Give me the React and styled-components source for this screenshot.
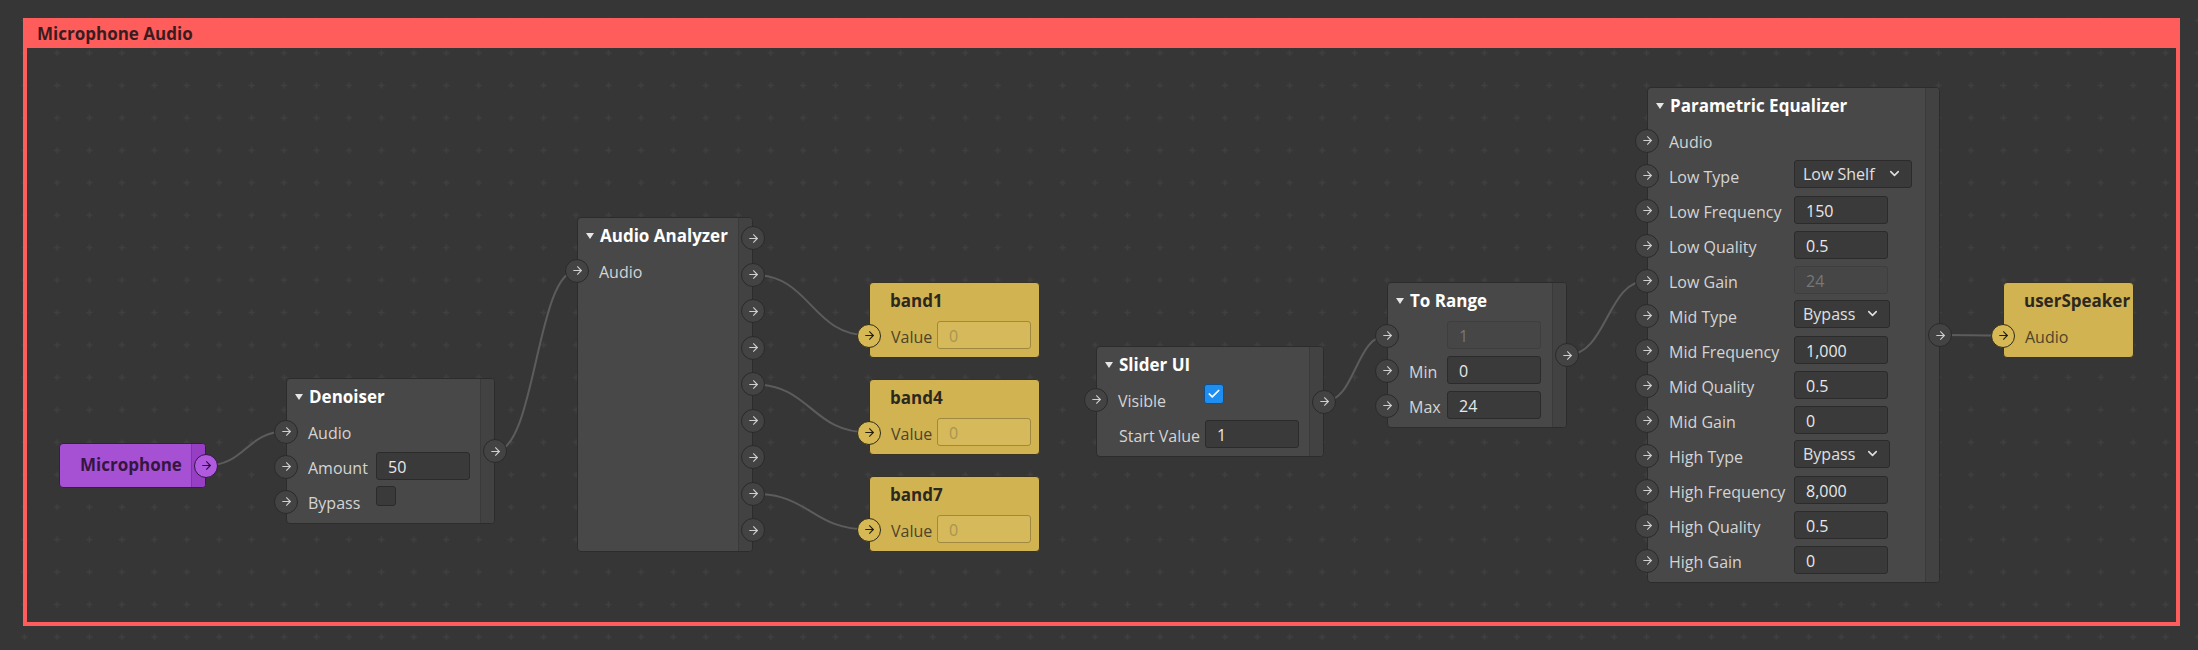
import styled, { createGlobalStyle } from "styled-components";
import { ArrowRight, ChevronDown, Check } from "lucide-react";

const GlobalStyle = createGlobalStyle`
	html, body {
		margin: 0;
		padding: 0;
		background: #363636;
	}
	body {
		font-family: "Open Sans", "Noto Sans", sans-serif;
		overflow: hidden;
	}
	* {
		box-sizing: border-box;
	}
`;

const tones = {
	dark: {
		bg: "#484848",
		border: "#2c2c2c",
		title: "#ffffff",
		label: "#d4d4d4",
		strip: "#424242",
		port: "#434343",
		portBorder: "#2a2a2a",
		arrow: "#d0d0d0",
	},
	yellow: {
		bg: "#d1b352",
		border: "#3a3322",
		title: "#2c2820",
		label: "#4d4429",
		strip: "#c4a748",
		port: "#d6b954",
		portBorder: "#2e2a1c",
		arrow: "#221e14",
	},
	purple: {
		bg: "#a650d4",
		border: "#3a1a4a",
		title: "#35163f",
		label: "#35163f",
		strip: "#973fc4",
		port: "#b05ae0",
		portBorder: "#341543",
		arrow: "#2a1034",
	},
};

const Canvas = styled.div`
	position: relative;
	width: 2198px;
	height: 650px;
	background: #363636;
	overflow: hidden;
`;

const Layer = styled.svg`
	position: absolute;
	left: 0;
	top: 0;
	width: 2198px;
	height: 650px;
	pointer-events: none;
`;

const Group = styled.div`
	position: absolute;
	left: 23px;
	top: 18px;
	width: 2157px;
	height: 608px;
	border: 4px solid #ff5c5c;
	border-top: 0;
`;

const GroupTitle = styled.div`
	height: 30px;
	background: #ff5c5c;
	padding-left: 10px;
	display: flex;
	align-items: center;
	font-size: 17px;
	font-weight: 700;
	color: #3a1c1f;
`;

const Node = styled.div`
	position: absolute;
	left: ${(p) => p.$x}px;
	top: ${(p) => p.$y}px;
	width: ${(p) => p.$w}px;
	display: flex;
	background: ${(p) => tones[p.$tone].bg};
	border: 1px solid ${(p) => tones[p.$tone].border};
	border-radius: 4px;
`;

const Body = styled.div`
	flex: 1;
	padding-bottom: 4px;
`;

const Header = styled.div`
	height: 35px;
	display: flex;
	align-items: center;
	gap: 6px;
	padding-left: ${(p) => (p.$caret ? 8 : 20)}px;
	font-size: 17px;
	font-weight: 700;
	color: ${(p) => tones[p.$tone].title};
	white-space: nowrap;
`;

const Caret = styled.span`
	width: 0;
	height: 0;
	border-left: 4.5px solid transparent;
	border-right: 4.5px solid transparent;
	border-top: 6px solid #e6e6e6;
	margin-top: 1px;
`;

const Row = styled.div`
	height: 35px;
	display: flex;
	align-items: center;
`;

const Label = styled.span`
	flex-shrink: 0;
	width: ${(p) => p.$w}px;
	margin-left: ${(p) => p.$indent || 10}px;
	padding-top: 3px;
	font-size: 16px;
	color: ${(p) => tones[p.$tone].label};
	white-space: nowrap;
`;

const Strip = styled.div`
	width: 14px;
	flex-shrink: 0;
	background: ${(p) => tones[p.$tone].strip};
	border-left: 1px solid ${(p) => (p.$tone === "dark" ? "#3a3a3a" : "rgba(0,0,0,0.15)")};
	border-radius: 0 3px 3px 0;
	display: flex;
	flex-direction: column;
	justify-content: ${(p) => (p.$list ? "flex-start" : "center")};
	align-items: flex-end;
	padding: ${(p) => (p.$list ? "2px 0" : "0")};
`;

const Slot = styled.div`
	height: 36.5px;
	display: flex;
	align-items: center;
`;

const PortDot = styled.span`
	width: 24px;
	height: 24px;
	flex-shrink: 0;
	border-radius: 50%;
	background: ${(p) => tones[p.$tone].port};
	border: 1.5px solid ${(p) => tones[p.$tone].portBorder};
	color: ${(p) => tones[p.$tone].arrow};
	display: flex;
	align-items: center;
	justify-content: center;
	margin-left: ${(p) => (p.$side === "in" ? "-13px" : "0")};
	margin-right: ${(p) => (p.$side === "out" ? "-13px" : "0")};
	position: relative;
	z-index: 1;
`;

const Field = styled.input`
	width: 94px;
	height: 28px;
	margin-top: -2px;
	padding: 2px 0 0 11px;
	border-radius: 3px;
	font-family: inherit;
	font-size: 16px;
	outline: none;
	background: ${(p) => (p.$tone === "yellow" ? "#d5b95a" : p.disabled ? "#464646" : "#3a3a3a")};
	border: 1px solid ${(p) => (p.$tone === "yellow" ? "#9f8940" : p.disabled ? "#3e3e3e" : "#2b2b2b")};
	color: ${(p) => (p.disabled ? "#777777" : "#e8e8e8")};
	&::placeholder {
		color: #a89552;
	}
`;

const Select = styled.div`
	width: ${(p) => p.$w}px;
	height: 28px;
	margin-top: -4px;
	padding: 0 9px 0 8px;
	border-radius: 3px;
	background: #3a3a3a;
	border: 1px solid #2b2b2b;
	display: flex;
	align-items: center;
	justify-content: space-between;
	font-size: 16px;
	color: #e0e0e0;
`;

const Box = styled.span`
	width: 20px;
	height: 20px;
	align-self: flex-start;
	margin-top: 2px;
	border-radius: 3px;
	background: ${(p) => (p.$on ? "#1e8ff0" : "#3a3a3a")};
	border: 1px solid ${(p) => (p.$on ? "#0e4f8c" : "#2a2a2a")};
	display: flex;
	align-items: center;
	justify-content: center;
	color: #ffffff;
`;

const CenterTitle = styled.div`
	flex: 1;
	height: 43px;
	display: flex;
	align-items: center;
	padding: 0 0 3px 20px;
	font-size: 17px;
	font-weight: 700;
	color: ${(p) => tones[p.$tone].title};
`;

function Port({ tone = "dark", side }) {
	return (
		<PortDot $tone={tone} $side={side}>
			<ArrowRight size={13} strokeWidth={2} />
		</PortDot>
	);
}

function InRow({ tone = "dark", label, lw, children }) {
	return (
		<Row>
			<Port tone={tone} side="in" />
			<Label $tone={tone} $w={lw}>
				{label}
			</Label>
			{children}
		</Row>
	);
}

function NodeHead({ title, tone = "dark", caret = true }) {
	return (
		<Header $tone={tone} $caret={caret}>
			{caret && <Caret />}
			{title}
		</Header>
	);
}

function OutStrip({ tone = "dark" }) {
	return (
		<Strip $tone={tone}>
			<Port tone={tone} side="out" />
		</Strip>
	);
}

function ValueNode({ x, y, title }) {
	return (
		<Node $x={x} $y={y} $w={171} $tone="yellow">
			<Body>
				<NodeHead title={title} tone="yellow" caret={false} />
				<InRow tone="yellow" label="Value" lw={46}>
					<Field $tone="yellow" placeholder="0" readOnly />
				</InRow>
			</Body>
		</Node>
	);
}

const wires = [
	[206, 465.5, 286, 431.5],
	[495, 451.5, 577, 270.5],
	[753, 274.75, 869, 335.5],
	[753, 384.25, 869, 432.5],
	[753, 493.75, 869, 529.5],
	[1324, 401.5, 1387, 335.5],
	[1567, 355, 1647, 280.5],
	[1940, 335, 2003, 335.5],
];

function wirePath([x1, y1, x2, y2]) {
	const d = Math.max(30, (x2 - x1) * 0.5);
	return `M${x1} ${y1} C${x1 + d} ${y1}, ${x2 - d} ${y2}, ${x2} ${y2}`;
}

const peRows = [
	["Audio"],
	["Low Type", "select", "Low Shelf", 118],
	["Low Frequency", "field", "150"],
	["Low Quality", "field", "0.5"],
	["Low Gain", "off", "24"],
	["Mid Type", "select", "Bypass", 96],
	["Mid Frequency", "field", "1,000"],
	["Mid Quality", "field", "0.5"],
	["Mid Gain", "field", "0"],
	["High Type", "select", "Bypass", 96],
	["High Frequency", "field", "8,000"],
	["High Quality", "field", "0.5"],
	["High Gain", "field", "0"],
];

export default function App() {
	return (
		<Canvas>
			<GlobalStyle />
			<Layer>
				<defs>
					<pattern id="grid" width="32.44" height="32.44" x="40.78" y="36.78" patternUnits="userSpaceOnUse">
						<path d="M16.22 13.22v6M13.22 16.22h6" stroke="#404040" strokeWidth="1.5" />
					</pattern>
				</defs>
				<rect width="2198" height="650" fill="url(#grid)" />
			</Layer>

			<Group>
				<GroupTitle>Microphone Audio</GroupTitle>
			</Group>

			<Layer>
				{wires.map((w, i) => (
					<path key={i} d={wirePath(w)} fill="none" stroke="#5c5c5c" strokeWidth="2" />
				))}
			</Layer>

			<Node $x={59} $y={443} $w={147} $tone="purple">
				<CenterTitle $tone="purple">Microphone</CenterTitle>
				<OutStrip tone="purple" />
			</Node>

			<Node $x={286} $y={378} $w={209} $tone="dark">
				<Body>
					<NodeHead title="Denoiser" />
					<InRow label="Audio" lw={68} />
					<InRow label="Amount" lw={68}>
						<Field defaultValue="50" readOnly />
					</InRow>
					<InRow label="Bypass" lw={68}>
						<Box />
					</InRow>
				</Body>
				<OutStrip />
			</Node>

			<Node $x={577} $y={217} $w={176} $tone="dark">
				<Body>
					<NodeHead title="Audio Analyzer" />
					<InRow label="Audio" lw={60} />
				</Body>
				<Strip $tone="dark" $list>
					{Array.from({ length: 9 }, (_, i) => (
						<Slot key={i}>
							<Port side="out" />
						</Slot>
					))}
				</Strip>
			</Node>

			<ValueNode x={869} y={282} title="band1" />
			<ValueNode x={869} y={379} title="band4" />
			<ValueNode x={869} y={476} title="band7" />

			<Node $x={1096} $y={346} $w={228} $tone="dark">
				<Body>
					<NodeHead title="Slider UI" />
					<InRow label="Visible" lw={86}>
						<Box $on>
							<Check size={14} strokeWidth={3} />
						</Box>
					</InRow>
					<Row>
						<Label $tone="dark" $w={86} $indent={22}>
							Start Value
						</Label>
						<Field defaultValue="1" readOnly />
					</Row>
				</Body>
				<OutStrip />
			</Node>

			<Node $x={1387} $y={282} $w={180} $tone="dark">
				<Body>
					<NodeHead title="To Range" />
					<InRow label="" lw={38}>
						<Field defaultValue="1" disabled />
					</InRow>
					<InRow label="Min" lw={38}>
						<Field defaultValue="0" readOnly />
					</InRow>
					<InRow label="Max" lw={38}>
						<Field defaultValue="24" readOnly />
					</InRow>
				</Body>
				<OutStrip />
			</Node>

			<Node $x={1647} $y={87} $w={293} $tone="dark">
				<Body>
					<NodeHead title="Parametric Equalizer" />
					{peRows.map(([label, kind, value, w]) => (
						<InRow key={label} label={label} lw={125}>
							{kind === "select" && (
								<Select $w={w}>
									{value}
									<ChevronDown size={15} strokeWidth={2.5} />
								</Select>
							)}
							{kind === "field" && <Field defaultValue={value} readOnly />}
							{kind === "off" && <Field defaultValue={value} disabled />}
						</InRow>
					))}
				</Body>
				<OutStrip />
			</Node>

			<Node $x={2003} $y={282} $w={131} $tone="yellow">
				<Body>
					<NodeHead title="userSpeaker" tone="yellow" caret={false} />
					<InRow tone="yellow" label="Audio" lw={60} />
				</Body>
			</Node>
		</Canvas>
	);
}
